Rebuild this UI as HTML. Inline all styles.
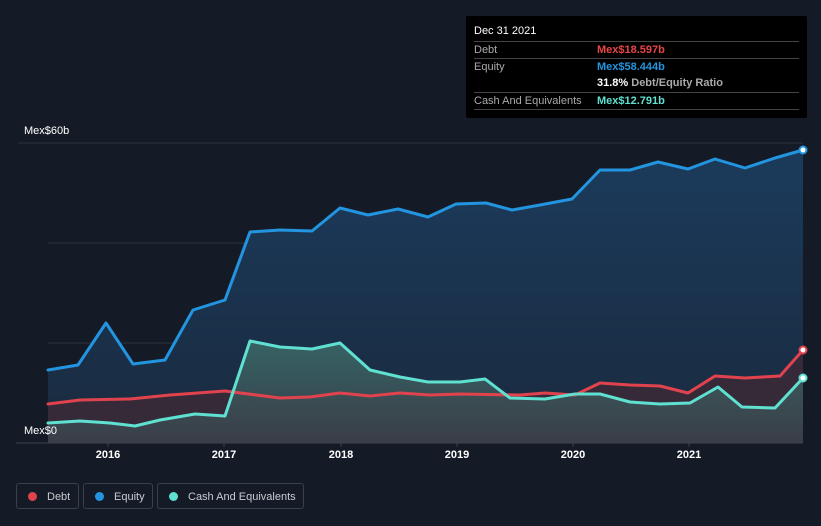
<!DOCTYPE html>
<html><head><meta charset="utf-8"><style>
body{margin:0;width:821px;height:526px;background:#151b26;font-family:"Liberation Sans",sans-serif;position:relative;overflow:hidden}
.tip{position:absolute;left:466px;top:16px;width:341px;height:102px;background:#000;border-radius:2px}
.tip .h{position:absolute;left:8px;top:9px;color:#fff;font-size:11px}
.row{position:absolute;left:8px;width:325px;border-top:1px solid #444;font-size:11px;height:17px;line-height:17px;color:#aaa}
.row span{position:absolute;left:123px;font-weight:bold}
.leg{position:absolute;top:483px;height:26px;border:1px solid #3a404a;border-radius:3px;color:#c8ccd2;font-size:11px;line-height:26px;box-sizing:border-box}
.leg i{display:inline-block;width:9px;height:9px;border-radius:50%;margin:0 10px 0 11px;vertical-align:-1px}
.yl{position:absolute;color:#fff;font-size:11px}
.x{position:absolute;top:449px;color:#fff;font-size:11px;font-weight:bold;width:40px;text-align:center}
</style></head><body>
<svg width="821" height="526" style="position:absolute;left:0;top:0">
<defs>
<linearGradient id="ge" x1="0" y1="0" x2="0" y2="1"><stop offset="0" stop-color="#1b3b5c"/><stop offset="1" stop-color="#1a2a3e"/></linearGradient>
<linearGradient id="gc" x1="0" y1="0" x2="0" y2="1"><stop offset="0" stop-color="#3c6b68"/><stop offset="1" stop-color="#3a414b"/></linearGradient>
</defs>
<g stroke="#2a3340" stroke-width="1"><line x1="18" y1="143" x2="803" y2="143"/><line x1="48" y1="243" x2="803" y2="243"/><line x1="48" y1="343" x2="803" y2="343"/></g>
<polygon fill="url(#ge)" points="48,443 48,370 78,365 106,323 133,364 165,360 193,310 225,300 250,232 280,230 312,231 340,208 368,215 398,209 428,217 456,204 486,203 512,210 540,205 572,199 600,170 630,170 658,162 688,169 715,159 745,168 775,158 803,150 803,443"/>
<polygon fill="#3a2a38" opacity="0.9" points="48,443 48,404 80,400 130,399 170,395 225,391 280,398 310,397 340,393 370,396 400,393 430,395 460,394 520,395 545,393 575,395 600,383 630,385 660,386 688,393 715,376 745,378 780,376 803,350 803,443"/>
<polygon fill="url(#gc)" opacity="0.85" points="48,443 48,423 80,421 110,423 135,426 160,420 195,414 225,416 250,341 280,347 312,349 340,343 370,370 400,377 428,382 460,382 485,379 510,398 545,399 575,394 600,394 630,402 660,404 690,403 718,387 742,407 775,408 803,378 803,443"/>
<g fill="none" stroke-width="3" stroke-linejoin="round" stroke-linecap="round">
<polyline stroke="#2394df" points="48,370 78,365 106,323 133,364 165,360 193,310 225,300 250,232 280,230 312,231 340,208 368,215 398,209 428,217 456,204 486,203 512,210 540,205 572,199 600,170 630,170 658,162 688,169 715,159 745,168 775,158 803,150"/>
<polyline stroke="#e0434d" points="48,404 80,400 130,399 170,395 225,391 280,398 310,397 340,393 370,396 400,393 430,395 460,394 520,395 545,393 575,395 600,383 630,385 660,386 688,393 715,376 745,378 780,376 803,350"/>
<polyline stroke="#5fe0d0" points="48,423 80,421 110,423 135,426 160,420 195,414 225,416 250,341 280,347 312,349 340,343 370,370 400,377 428,382 460,382 485,379 510,398 545,399 575,394 600,394 630,402 660,404 690,403 718,387 742,407 775,408 803,378"/>
</g>
<circle cx="803" cy="150" r="3.5" fill="#fff" stroke="#2394df" stroke-width="2"/>
<circle cx="803" cy="350" r="3.5" fill="#fff" stroke="#e0434d" stroke-width="2"/>
<circle cx="803" cy="378" r="3.5" fill="#fff" stroke="#5fe0d0" stroke-width="2"/>
<line x1="16" y1="443" x2="803" y2="443" stroke="#3a4250"/>
<g stroke="#3a4250"><line x1="108" y1="443" x2="108" y2="447"/><line x1="224" y1="443" x2="224" y2="447"/><line x1="341" y1="443" x2="341" y2="447"/><line x1="457" y1="443" x2="457" y2="447"/><line x1="573" y1="443" x2="573" y2="447"/><line x1="689" y1="443" x2="689" y2="447"/></g>
</svg>
<div class="yl" style="left:24px;top:125px">Mex$60b</div>
<div class="yl" style="left:24px;top:425px">Mex$0</div>
<div class="x" style="left:88px">2016</div><div class="x" style="left:204px">2017</div><div class="x" style="left:321px">2018</div><div class="x" style="left:437px">2019</div><div class="x" style="left:553px">2020</div><div class="x" style="left:669px">2021</div>
<div class="tip">
<div class="h">Dec 31 2021</div>
<div class="row" style="top:25px">Debt<span style="color:#e84545">Mex$18.597b</span></div>
<div class="row" style="top:42px">Equity<span style="color:#2394df">Mex$58.444b</span></div>
<div class="row" style="top:59px;border-top:none"><span style="color:#fff">31.8% <b style="color:#aaa">Debt/Equity Ratio</b></span></div>
<div class="row" style="top:76px">Cash And Equivalents<span style="color:#5fe0d0">Mex$12.791b</span></div>
<div class="row" style="top:93px;height:0"></div>
</div>
<div class="leg" style="left:16px;width:63px"><i style="background:#e0434d"></i>Debt</div>
<div class="leg" style="left:83px;width:70px"><i style="background:#2394df"></i>Equity</div>
<div class="leg" style="left:157px;width:147px"><i style="background:#5fe0d0"></i>Cash And Equivalents</div>
</body></html>
